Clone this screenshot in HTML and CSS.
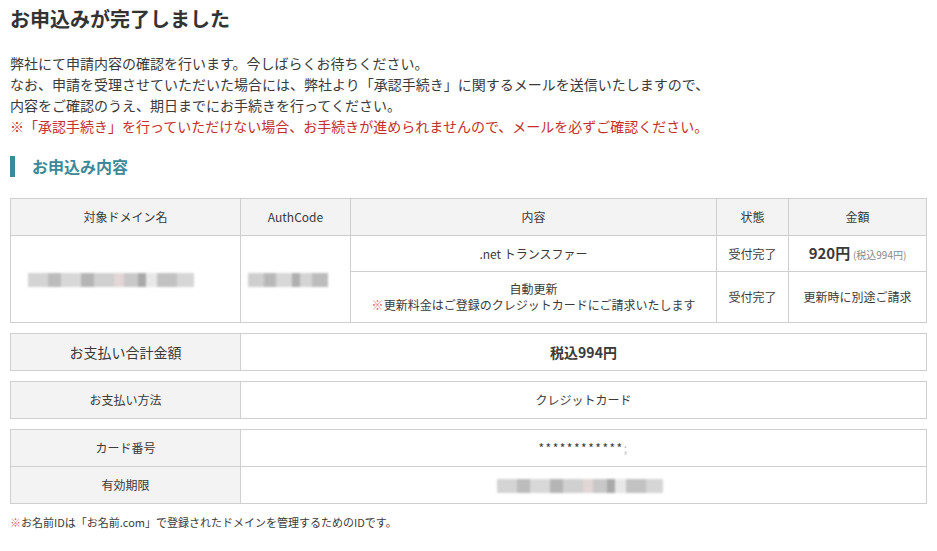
FILE: index.html
```html
<!DOCTYPE html>
<html lang="ja">
<head>
    <meta charset="UTF-8">
    <title>お申込み完了</title>
    <link rel="stylesheet" href="styles.css">
</head>
<body>
    <div class="page">
        <h1 class="ttl">お申込みが完了しました</h1>
        <p class="lead">
            弊社にて申請内容の確認を行います。今しばらくお待ちください。<br>
            なお、申請を受理させていただいた場合には、弊社より「承認手続き」に関するメールを送信いたしますので、<br>
            内容をご確認のうえ、期日までにお手続きを行ってください。<br>
            <span class="warn">※「承認手続き」を行っていただけない場合、お手続きが進められませんので、メールを必ずご確認ください。</span>
        </p>

        <h2 class="sec">お申込み内容</h2>

        <table class="tbl order">
            <tr class="head">
                <th class="c1">対象ドメイン名</th>
                <th class="c2">AuthCode</th>
                <th class="c3">内容</th>
                <th class="c4">状態</th>
                <th class="c5">金額</th>
            </tr>
            <tr class="r1">
                <td rowspan="2"><span class="blur blur-domain"></span></td>
                <td rowspan="2"><span class="blur blur-code"></span></td>
                <td>.net トランスファー</td>
                <td>受付完了</td>
                <td><b class="price">920円</b> <span class="tax">(税込994円)</span></td>
            </tr>
            <tr class="r2">
                <td>自動更新<br><span class="mark">※</span>更新料金はご登録のクレジットカードにご請求いたします</td>
                <td>受付完了</td>
                <td>更新時に別途ご請求</td>
            </tr>
        </table>

        <table class="tbl info">
            <tr>
                <th class="lbl big">お支払い合計金額</th>
                <td class="total">税込994円</td>
            </tr>
        </table>

        <table class="tbl info">
            <tr>
                <th class="lbl">お支払い方法</th>
                <td>クレジットカード</td>
            </tr>
        </table>

        <table class="tbl info">
            <tr>
                <th class="lbl">カード番号</th>
                <td class="card">************<span class="last">;</span></td>
            </tr>
            <tr>
                <th class="lbl">有効期限</th>
                <td><span class="blur blur-domain blur-exp"></span></td>
            </tr>
        </table>

        <p class="note"><span class="mark">※</span>お名前IDは「お名前.com」で登録されたドメインを管理するためのIDです。</p>
    </div>
</body>
</html>
```

FILE: styles.css
```css
*{
    margin:0;
    padding:0;
    box-sizing:border-box;
}
body{
    background:#fff;
    color:#3a3a3a;
    font-family:"Noto Sans CJK JP","Noto Sans",sans-serif;
}
.page{
    padding:5px 10px 0 10px;
}
.ttl{
    font-size:20px;
    line-height:28px;
    font-weight:bold;
    color:#333;
}
.lead{
    margin-top:20px;
    font-size:14px;
    line-height:21px;
}
.lead .warn{
    color:#c3302c;
}
.sec{
    margin-top:19px;
    border-left:5px solid #3c8a98;
    padding-left:17px;
    font-size:16px;
    line-height:21px;
    color:#3c8a98;
    font-weight:bold;
}

.tbl{
    width:100%;
    border-collapse:collapse;
    table-layout:fixed;
    font-size:12px;
    text-align:center;
}
.tbl th,.tbl td{
    border:1px solid #cfcfcf;
    font-weight:normal;
    vertical-align:middle;
    line-height:16px;
}
.tbl th{
    background:#f3f3f3;
}
.order{
    margin-top:21px;
}
.order .c1{ width:230px; }
.order .c2{ width:110px; }
.order .c4{ width:72px; }
.order .c5{ width:138px; }
.order .head th{ height:37px; }
.order .r1 td{ height:36px; }
.order .r2 td{ height:51px; }

.price{
    font-size:15px;
    font-weight:bold;
}
.tax{
    font-size:10px;
    color:#888;
}
.mark{
    color:#e06a6a;
}

.info{
    margin-top:10px;
}
.info th,.info td{
    height:37px;
}
.info .lbl{
    width:230px;
}
.info .big{
    font-size:14px;
}
.info .total{
    font-size:14px;
    font-weight:bold;
}
.card{
    letter-spacing:1.5px;
    font-size:12px;
}
.card .last{
    color:#bbb;
}

.blur{
    display:inline-block;
    height:14px;
    vertical-align:middle;
    filter:blur(1px);
}
.blur-domain{
    width:166px;
    margin-right:30px;
    background:linear-gradient(90deg,#d4d4d4 0 12%,#bcbcbc 12% 20%,#d8d8d8 20% 32%,#b5b5b5 32% 40%,#d0d0d0 40% 52%,#e2d6d6 52% 58%,#c8c8c8 58% 66%,#a9a9a9 66% 71%,#e8e8e8 71% 78%,#c2c2c2 78% 90%,#d6d6d6 90% 100%);
}
.blur-exp{
    margin-right:8px;
}
.blur-code{
    width:80px;
    margin-right:16px;
    background:linear-gradient(90deg,#cfcfcf 0 20%,#b8b8b8 20% 35%,#d8d8d8 35% 55%,#b0b0b0 55% 65%,#d4d4d4 65% 80%,#bdbdbd 80% 100%);
}

.note{
    margin-top:10px;
    font-size:11px;
    line-height:16px;
}
```
